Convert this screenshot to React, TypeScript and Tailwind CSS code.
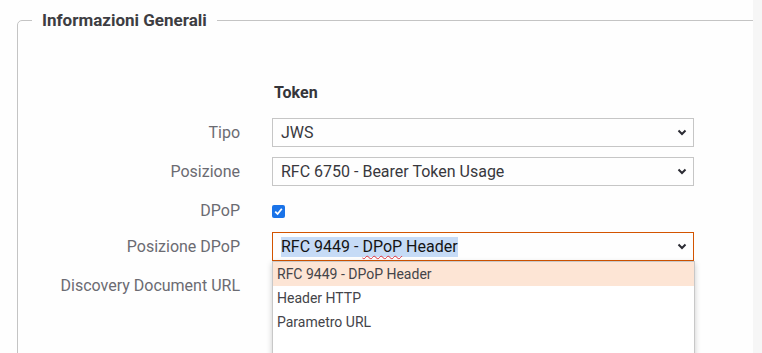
import React from "react";

const Chevron = () => (
  <svg width="10" height="7" viewBox="0 0 10 7" className="shrink-0">
    <path d="M1.5 1.5 L5 5 L8.5 1.5" fill="none" stroke="#2b2b33" strokeWidth="2" />
  </svg>
);

const Label = ({ children }: { children: React.ReactNode }) => (
  <div className="w-[208px] text-right text-[16px] text-[#6b6b72] leading-5">{children}</div>
);

export default function App() {
  return (
    <div className="w-[762px] h-[353px] flex bg-[#fefefe] overflow-hidden font-['Roboto',sans-serif]">
      <div className="w-[753px] h-full overflow-hidden pl-[17px] pt-[10px]">
        <fieldset className="w-[800px] h-[400px] border border-[#c4c4c4] rounded-[5px] pl-[14px]">
          <legend className="px-[10px] text-[17px] leading-5 font-bold text-[#3d3d42]">
            Informazioni Generali
          </legend>

          <div className="pt-[52px]">
            <div className="flex items-center gap-8">
              <div className="w-[208px]" />
              <div className="text-[16px] font-bold text-[#35353a] leading-5 pl-[2px] mt-[1px]">Token</div>
            </div>

            <div className="flex items-center gap-8 mt-[15px]">
              <Label>Tipo</Label>
              <div className="w-[422px] h-[29px] border border-[#c6c6c6] flex items-center justify-between pl-[8px] pr-[6px] text-[16px] text-[#38383d]">
                <span>JWS</span>
                <Chevron />
              </div>
            </div>

            <div className="flex items-center gap-8 mt-[10px]">
              <Label>Posizione</Label>
              <div className="w-[422px] h-[29px] border border-[#c6c6c6] flex items-center justify-between pl-[8px] pr-[6px] text-[16px] text-[#38383d]">
                <span>RFC 6750 - Bearer Token Usage</span>
                <Chevron />
              </div>
            </div>

            <div className="flex items-center gap-8 mt-[10px] h-[29px]">
              <Label>DPoP</Label>
              <div className="w-[13px] h-[13px] rounded-[2px] bg-[#1a73e8] flex items-center justify-center mt-[1px]">
                <svg width="9" height="9" viewBox="0 0 9 9">
                  <path d="M1.2 4.6 L3.6 7 L7.8 1.8" fill="none" stroke="#fff" strokeWidth="1.8" />
                </svg>
              </div>
            </div>

            <div className="flex items-center gap-8 mt-[7px]">
              <Label>Posizione DPoP</Label>
              <div className="relative w-[422px] h-[29px] border border-[#d35400] flex items-center justify-between pl-[8px] pr-[6px] text-[16px] text-[#141414]">
                <span className="bg-[#c6dbf6] leading-5">
                  RFC 9449 -{" "}
                  <span className="underline decoration-wavy decoration-[#e0303a] decoration-1 underline-offset-[3px]">DPoP</span>{" "}
                  Header
                </span>
                <Chevron />
                <div className="absolute left-[-1px] top-[28px] w-[423px] h-[120px] bg-white border border-[#c8c8c8] shadow-[0_2px_6px_rgba(0,0,0,0.2)] text-[14px] text-[#444449] z-10">
                  <div className="h-[24px] bg-[#fde5d5] flex items-center pl-[4px]">RFC 9449 - DPoP Header</div>
                  <div className="h-[24px] flex items-center pl-[4px]">Header HTTP</div>
                  <div className="h-[24px] flex items-center pl-[4px]">Parametro URL</div>
                </div>
              </div>
            </div>

            <div className="flex items-center gap-8 mt-[10px] h-[29px]">
              <Label>Discovery Document URL</Label>
            </div>
          </div>
        </fieldset>
      </div>
      <div className="flex-1 bg-[#f6f6f6]" />
    </div>
  );
}
